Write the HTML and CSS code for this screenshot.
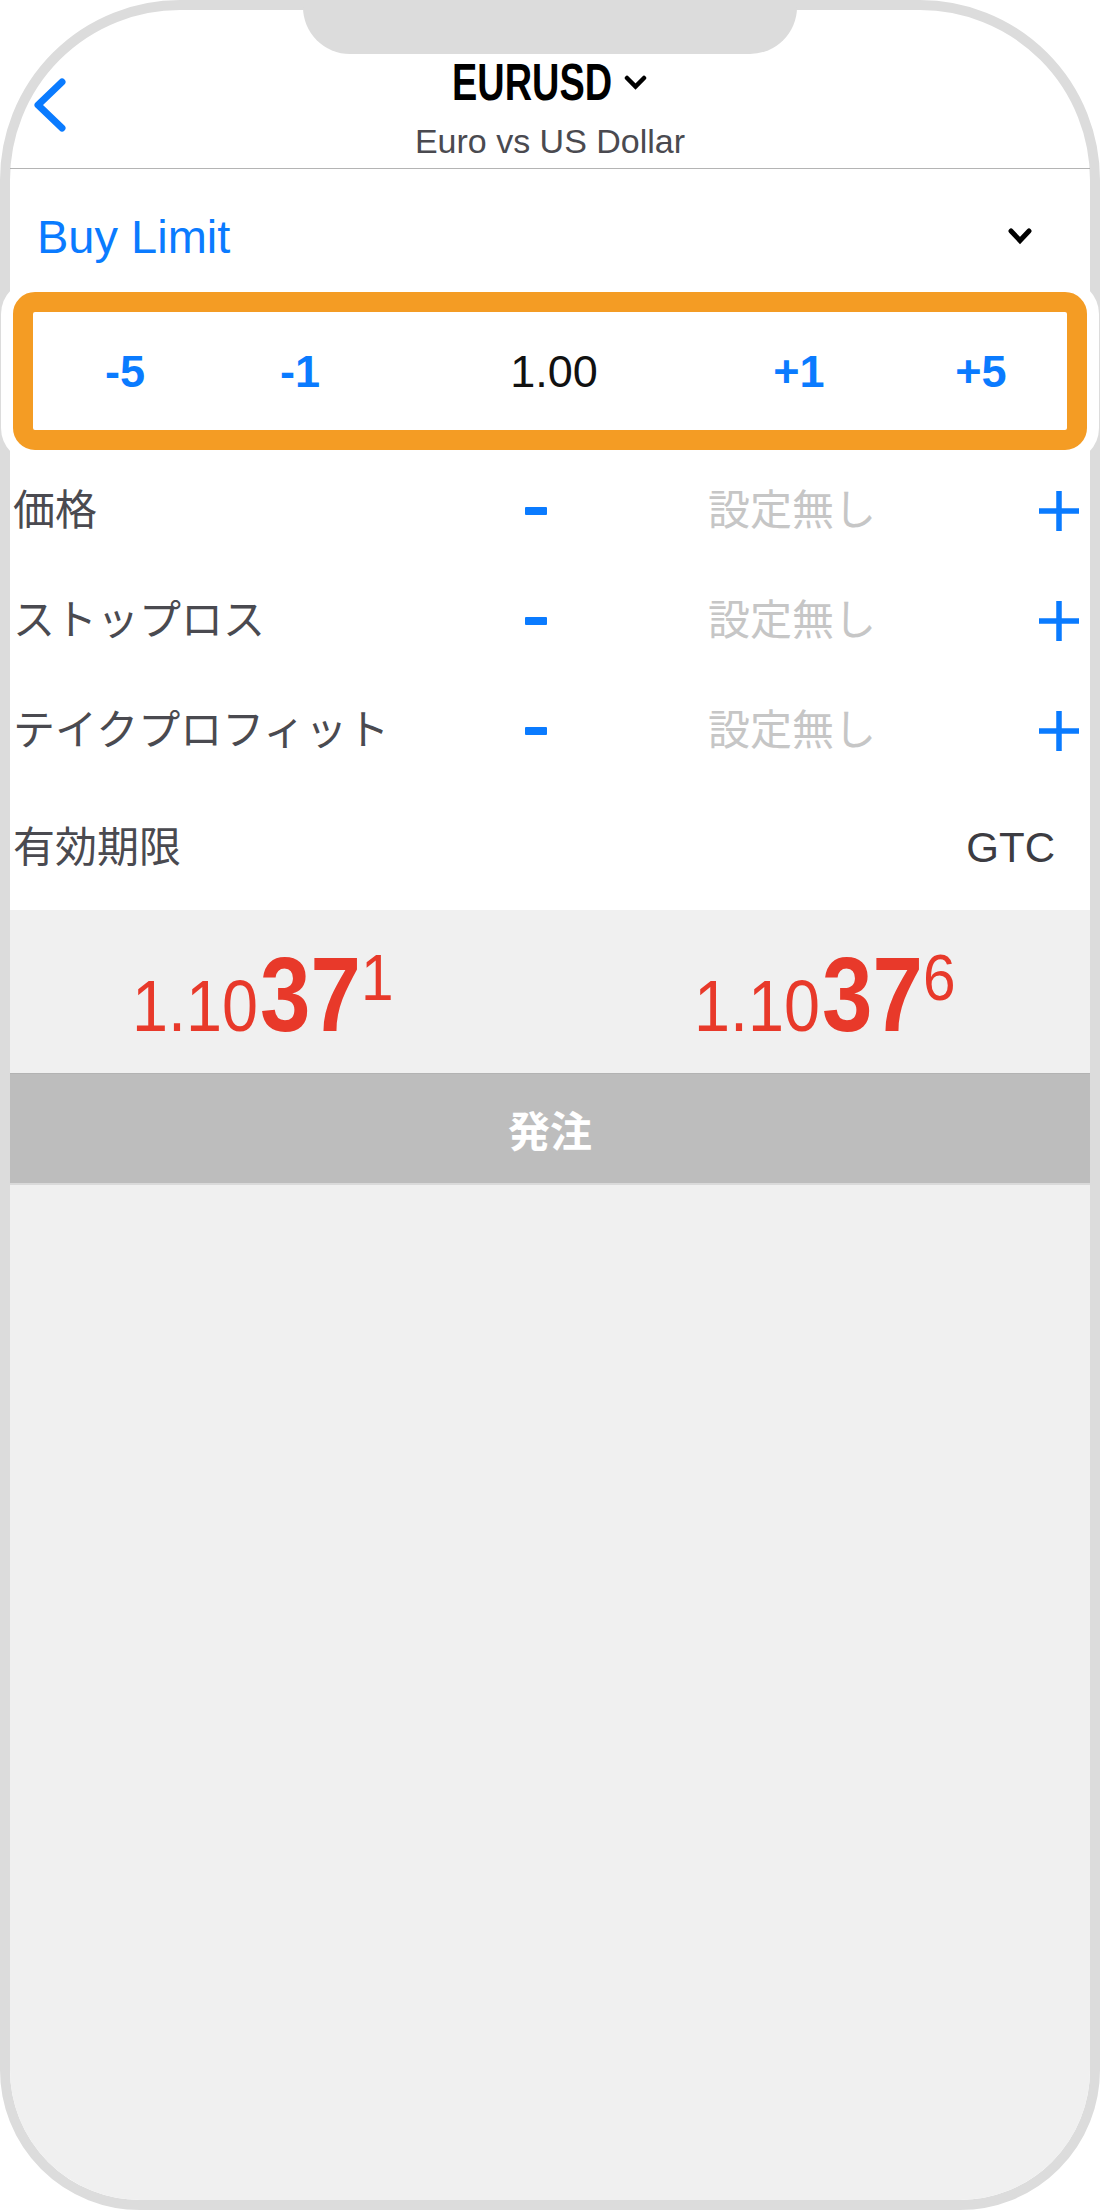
FILE: index.html
```html
<!DOCTYPE html>
<html lang="ja">

<head>
    <meta charset="UTF-8">
    <meta name="viewport" content="width=device-width, initial-scale=1.0">
    <title>EURUSD - Buy Limit</title>
    <link rel="stylesheet" href="styles.css">
</head>

<body>

    <div class="phone">
        <div class="notch"></div>

        <header class="nav">
            <a class="back" href="#">
                <svg width="40" height="60" viewBox="0 0 40 60">
                    <path d="M34 8 L10 31 L34 54" fill="none" stroke="#0a7bff" stroke-width="7" stroke-linecap="round" stroke-linejoin="round" />
                </svg>
            </a>
            <div class="title">
                <div class="symbol">
                    <span class="symbol-code">EURUSD</span>
                    <svg width="25" height="15" viewBox="0 0 25 15">
                        <path d="M4 3 L12.5 11.5 L21 3" fill="none" stroke="#000" stroke-width="4.5" stroke-linecap="round" />
                    </svg>
                </div>
                <div class="symbol-name">Euro vs US Dollar</div>
            </div>
        </header>

        <div class="order-type">
            <span>Buy Limit</span>
            <svg width="26" height="18" viewBox="0 0 26 18">
                <path d="M4 4 L13 13.5 L22 4" fill="none" stroke="#000" stroke-width="5" stroke-linecap="round" />
            </svg>
        </div>

        <!-- lot size, highlighted -->
        <div class="lot-box">
            <span class="lot-step">-5</span>
            <span class="lot-step">-1</span>
            <span class="lot-value">1.00</span>
            <span class="lot-step">+1</span>
            <span class="lot-step last">+5</span>
        </div>

        <div class="fields">
            <div class="field">
                <span class="field-label">価格</span>
                <span class="minus"></span>
                <span class="field-value">設定無し</span>
                <span class="plus">
                    <svg width="40" height="40" viewBox="0 0 40 40">
                        <path d="M20 0 V40 M0 20 H40" stroke="#0a7bff" stroke-width="5.5" />
                    </svg>
                </span>
            </div>
            <div class="field">
                <span class="field-label">ストップロス</span>
                <span class="minus"></span>
                <span class="field-value">設定無し</span>
                <span class="plus">
                    <svg width="40" height="40" viewBox="0 0 40 40">
                        <path d="M20 0 V40 M0 20 H40" stroke="#0a7bff" stroke-width="5.5" />
                    </svg>
                </span>
            </div>
            <div class="field">
                <span class="field-label">テイクプロフィット</span>
                <span class="minus"></span>
                <span class="field-value">設定無し</span>
                <span class="plus">
                    <svg width="40" height="40" viewBox="0 0 40 40">
                        <path d="M20 0 V40 M0 20 H40" stroke="#0a7bff" stroke-width="5.5" />
                    </svg>
                </span>
            </div>
            <div class="expiry">
                <span class="field-label">有効期限</span>
                <span class="expiry-value">GTC</span>
            </div>
        </div>

        <div class="quotes">
            <div class="price">
                <span class="p-small">1.10</span><span class="p-big">37</span><span class="p-sup">1</span>
            </div>
            <div class="price">
                <span class="p-small">1.10</span><span class="p-big">37</span><span class="p-sup">6</span>
            </div>
        </div>

        <button class="submit" type="button">発注</button>

        <div class="filler"></div>
    </div>

</body>

</html>
```

FILE: styles.css
```css
* {
    box-sizing: border-box;
}

body {
    margin: 0;
    padding: 0;
    background: #fff;
    font-family: "Liberation Sans", "Noto Sans CJK JP", sans-serif;
    color: #4a4a50;
}

.phone {
    position: relative;
    display: flex;
    flex-direction: column;
    width: 1100px;
    height: 2210px;
    border: 10px solid #dcdcdc;
    border-radius: 180px 180px 140px 140px;
    background: #fff;
}

.notch {
    position: absolute;
    top: -10px;
    left: 293px;
    width: 494px;
    height: 54px;
    background: #dcdcdc;
    border-radius: 0 0 47px 47px;
}

/* header */

.nav {
    display: grid;
    grid-template-columns: 80px 1fr 80px;
    height: 159px;
    border-bottom: 1px solid #b4b4b4;
}

.back {
    display: block;
    margin: 64px 0 0 18px;
    width: 40px;
    height: 60px;
}

.title {
    text-align: center;
    padding-top: 46px;
}

.symbol {
    display: flex;
    justify-content: center;
    align-items: center;
    gap: 11px;
    font-weight: bold;
    font-size: 52px;
    line-height: 52px;
    color: #000;
}

/* narrow face is not installed, so squeeze the bold one */
.symbol-code {
    display: block;
    width: 160px;
    white-space: nowrap;
    text-align: left;
    transform: scaleX(0.729);
    transform-origin: left center;
}

.symbol-name {
    margin-top: 17px;
    font-size: 34px;
    line-height: 32px;
    color: #4a4a50;
}

/* order type */

.order-type {
    display: flex;
    justify-content: space-between;
    align-items: center;
    height: 123px;
    padding: 11px 57px 0 27px;
    font-size: 47px;
    line-height: 47px;
    color: #0a7bff;
}

/* lot */

.lot-box {
    display: grid;
    grid-template-columns: 184px 166px 342px 148px 1fr;
    align-items: center;
    height: 158px;
    margin: 0 3px;
    border: 20px solid #f49c24;
    border-radius: 22px;
    box-shadow: 0 0 0 12px #fff;
    font-size: 45px;
    line-height: 45px;
    text-align: center;
}

.lot-step {
    font-weight: bold;
    color: #0a7bff;
}

.lot-step.last {
    padding-left: 22px;
}

.lot-value {
    color: #111;
}

/* sl / tp rows */

.fields {
    margin-top: 6px;
}

.field {
    display: grid;
    grid-template-columns: 501px 50px 462px 1fr;
    align-items: center;
    height: 110px;
    font-size: 42px;
    line-height: 50px;
}

.field-label {
    padding-left: 3px;
    font-size: 42px;
    color: #4a4a50;
}

.minus {
    justify-self: center;
    width: 22px;
    height: 8px;
    background: #0a7bff;
    border-radius: 1px;
}

.field-value {
    text-align: center;
    color: #c6c6c6;
}

.plus {
    justify-self: end;
    margin-right: 11px;
    height: 40px;
}

.expiry {
    display: flex;
    justify-content: space-between;
    align-items: center;
    height: 124px;
    padding-right: 35px;
    font-size: 42px;
    line-height: 50px;
}

.expiry-value {
    color: #3c3c42;
}

/* prices */

.quotes {
    display: flex;
    align-items: flex-start;
    gap: 300px;
    height: 163px;
    padding: 31px 0 0 122px;
    background: #f0f0f0;
}

.price {
    display: flex;
    align-items: baseline;
    color: #e8392a;
}

.price span {
    display: block;
    white-space: nowrap;
    transform-origin: left center;
}

.p-small {
    width: 126px;
    font-size: 72px;
    line-height: 1;
    transform: scaleX(0.898);
}

.p-big {
    width: 101px;
    margin-left: 2px;
    font-size: 106px;
    font-weight: bold;
    line-height: 1;
    transform: scaleX(0.855);
}

.p-sup {
    align-self: flex-start;
    width: 33px;
    margin-top: 4px;
    font-size: 65px;
    line-height: 1;
    transform: scaleX(0.9);
}

.submit {
    display: block;
    width: 100%;
    height: 112px;
    border: none;
    border-top: 1px solid #b3b3b3;
    border-bottom: 2px solid #dadada;
    background: #bdbdbd;
    color: #fff;
    font-family: "Liberation Sans", "Noto Sans CJK JP", sans-serif;
    font-size: 42px;
    font-weight: bold;
}

.filler {
    flex: 1;
    background: #f0f0f0;
    border-radius: 0 0 130px 130px;
}
```
